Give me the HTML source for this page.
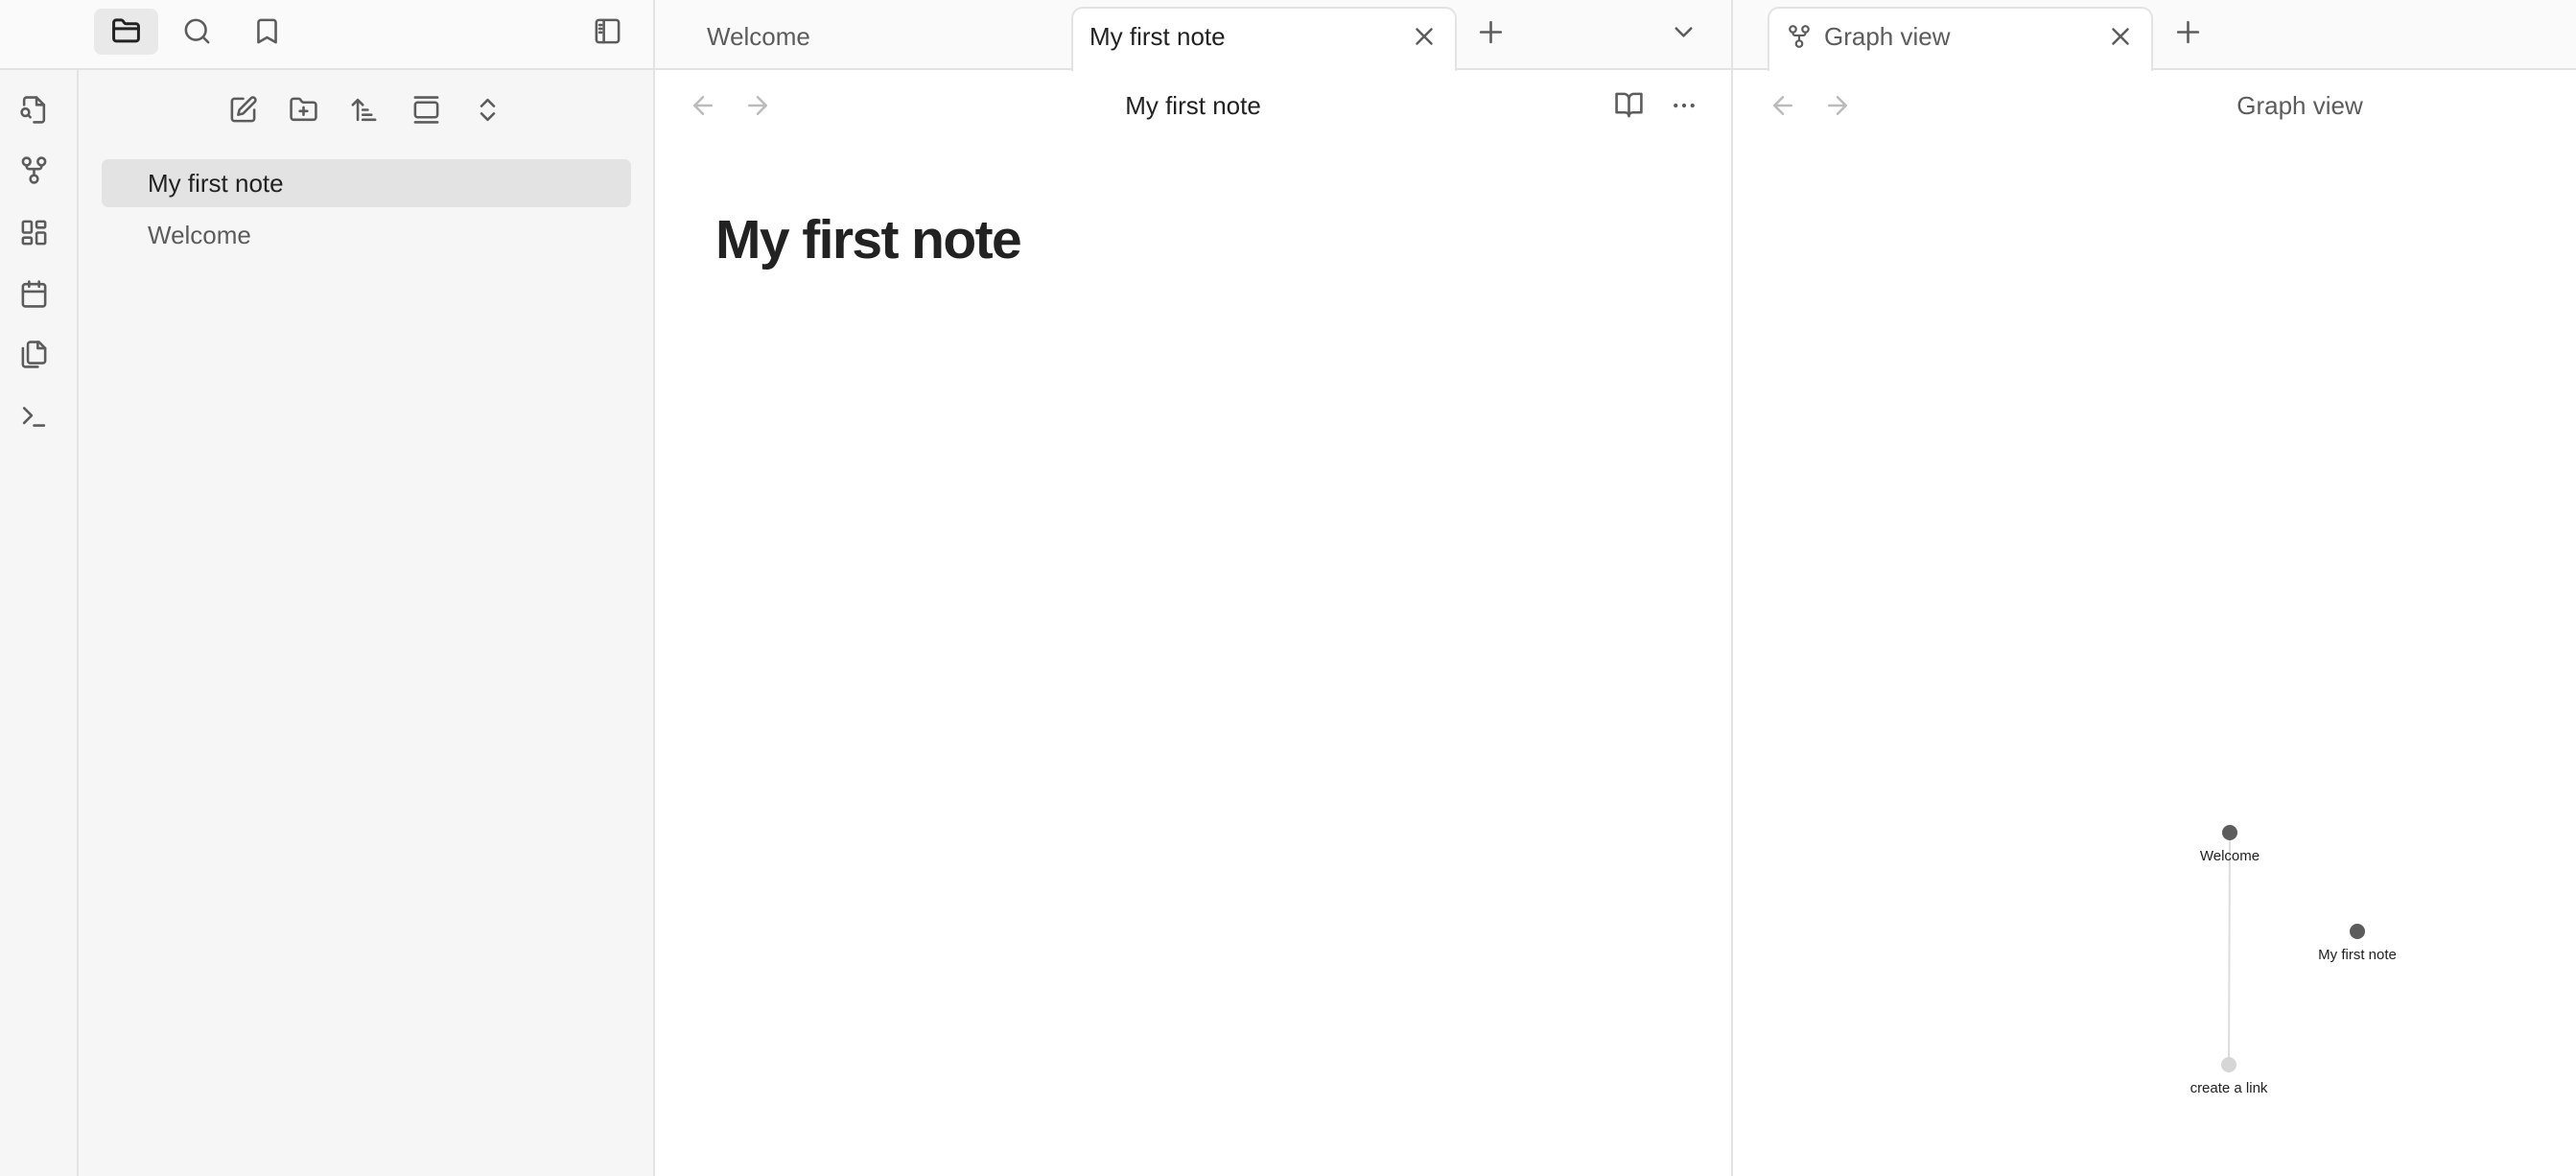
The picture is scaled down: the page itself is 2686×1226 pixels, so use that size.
<!DOCTYPE html>
<html><head><meta charset="utf-8">
<style>
*{box-sizing:border-box;margin:0;padding:0}
body{width:2686px;height:1226px;overflow:hidden;background:#fff;font-family:"Liberation Sans",sans-serif;position:relative;color:#222}
.a{position:absolute}
svg.i{position:absolute;fill:none;stroke:#5c5c5c;stroke-width:2;stroke-linecap:round;stroke-linejoin:round}
.t{position:absolute;white-space:nowrap;line-height:1}
</style></head><body>
<div class="a" style="left:0;top:0;width:682px;height:72px;background:#fafafa"></div>
<div class="a" style="left:0;top:72px;width:682px;height:1154px;background:#f6f6f6"></div>
<div class="a" style="left:0;top:71px;width:682px;height:2px;background:#e3e3e3"></div>
<div class="a" style="left:80px;top:72px;width:2px;height:1154px;background:#e3e3e3"></div>
<div class="a" style="left:681px;top:0;width:2px;height:1226px;background:#e3e3e3"></div>
<div class="a" style="left:683px;top:0;width:1122px;height:72px;background:#fafafa"></div>
<div class="a" style="left:1806px;top:0;width:880px;height:72px;background:#fafafa"></div>
<div class="a" style="left:683px;top:71px;width:2003px;height:2px;background:#e3e3e3"></div>
<div class="a" style="left:1805px;top:0;width:2px;height:1226px;background:#e3e3e3"></div>
<div class="a" style="left:1117px;top:7px;width:402px;height:67px;background:#fff;border:2px solid #e3e3e3;border-bottom:none;border-radius:12px 12px 0 0"></div>
<div class="a" style="left:1843px;top:7px;width:402px;height:67px;background:#fff;border:2px solid #e3e3e3;border-bottom:none;border-radius:12px 12px 0 0"></div>

<div class="a" style="left:98px;top:9px;width:67px;height:48px;background:#e9e9e9;border-radius:8px"></div>
<svg class="i" style="left:116px;top:17px;stroke:#222;stroke-width:2.3" width="31" height="31" viewBox="0 0 24 24"><path d="M4 20h16a2 2 0 0 0 2-2V8a2 2 0 0 0-2-2h-7.9a2 2 0 0 1-1.7-.9l-.8-1.2A2 2 0 0 0 7.9 3H4a2 2 0 0 0-2 2v13a2 2 0 0 0 2 2z"/><path d="M2 10h20"/></svg>
<svg class="i" style="left:190px;top:17px" width="31" height="31" viewBox="0 0 24 24"><circle cx="11" cy="11" r="8"/><path d="M21 21l-4.3-4.3"/></svg>
<svg class="i" style="left:263px;top:17px" width="31" height="31" viewBox="0 0 24 24"><path d="M19 21l-7-4-7 4V5a2 2 0 0 1 2-2h10a2 2 0 0 1 2 2z"/></svg>
<svg class="i" style="left:618px;top:17px" width="31" height="31" viewBox="0 0 24 24"><rect x="3" y="3" width="18" height="18" rx="2"/><path d="M9 3v18M5.5 7h1.5M5.5 10h1.5M5.5 13h1.5"/></svg>

<svg class="i" style="left:20px;top:99px" width="31" height="31" viewBox="0 0 24 24"><path d="M4 8V4a2 2 0 0 1 2-2h8l6 6v12a2 2 0 0 1-2 2h-6"/><path d="M14 2v6h6"/><circle cx="5" cy="14" r="3"/><path d="M9 18l-1.5-1.5"/></svg>
<svg class="i" style="left:20px;top:162px" width="31" height="31" viewBox="0 0 24 24"><circle cx="6" cy="5" r="3"/><circle cx="18" cy="5" r="3"/><circle cx="12" cy="19" r="3"/><path d="M6 8v1a2 2 0 0 0 2 2h8a2 2 0 0 0 2-2V8M12 11v5"/></svg>
<svg class="i" style="left:20px;top:227px" width="31" height="31" viewBox="0 0 24 24"><rect x="3" y="3" width="7" height="9" rx="1"/><rect x="14" y="3" width="7" height="5" rx="1"/><rect x="14" y="12" width="7" height="9" rx="1"/><rect x="3" y="16" width="7" height="5" rx="1"/></svg>
<svg class="i" style="left:20px;top:291px" width="31" height="31" viewBox="0 0 24 24"><rect x="3" y="4" width="18" height="18" rx="2"/><path d="M16 2v4M8 2v4M3 10h18"/></svg>
<svg class="i" style="left:20px;top:354px" width="31" height="31" viewBox="0 0 24 24"><path d="M9 2h7l5 5v10a2 2 0 0 1-2 2H9a2 2 0 0 1-2-2V4a2 2 0 0 1 2-2z"/><path d="M15 2v5h6"/><path d="M3 7v13a2 2 0 0 0 2 2h10"/></svg>
<svg class="i" style="left:20px;top:419px" width="31" height="31" viewBox="0 0 24 24"><path d="M4 17l6-6-6-6M12 19h8"/></svg>

<svg class="i" style="left:238px;top:99px" width="31" height="31" viewBox="0 0 24 24"><path d="M12 3H5a2 2 0 0 0-2 2v14a2 2 0 0 0 2 2h14a2 2 0 0 0 2-2v-7"/><path d="M18.4 2.6a2.1 2.1 0 0 1 3 3L12 15l-4 1 1-4z"/></svg>
<svg class="i" style="left:301px;top:99px" width="31" height="31" viewBox="0 0 24 24"><path d="M12 10v6M9 13h6"/><path d="M20 20a2 2 0 0 0 2-2V8a2 2 0 0 0-2-2h-7.9a2 2 0 0 1-1.7-.9l-.8-1.2A2 2 0 0 0 7.9 3H4a2 2 0 0 0-2 2v13a2 2 0 0 0 2 2z"/></svg>
<svg class="i" style="left:364px;top:99px" width="31" height="31" viewBox="0 0 24 24"><path d="M3 8l4-4 4 4M7 4v16M11 12h4M11 16h7M11 20h10"/></svg>
<svg class="i" style="left:429px;top:99px" width="31" height="31" viewBox="0 0 24 24"><path d="M3 2h18M3 22h18"/><rect x="3" y="6" width="18" height="12" rx="2"/></svg>
<svg class="i" style="left:493px;top:99px" width="31" height="31" viewBox="0 0 24 24"><path d="M7 15l5 5 5-5M7 9l5-5 5 5"/></svg>

<div class="a" style="left:106px;top:166px;width:552px;height:50px;background:#e3e3e3;border-radius:7px"></div>
<div class="t" style="left:154px;top:178px;font-size:26px;color:#222">My first note</div>
<div class="t" style="left:154px;top:232px;font-size:26px;color:#5c5c5c">Welcome</div>

<div class="t" style="left:737px;top:25px;font-size:26px;color:#5c5c5c">Welcome</div>
<div class="t" style="left:1136px;top:25px;font-size:26px;color:#222">My first note</div>
<svg class="i" style="left:1470px;top:23px" width="30" height="30" viewBox="0 0 24 24"><path d="M18 6L6 18M6 6l12 12"/></svg>
<svg class="i" style="left:1539px;top:18px" width="31" height="31" viewBox="0 0 24 24"><path d="M12 4v16M4 12h16"/></svg>
<svg class="i" style="left:1740px;top:18px" width="31" height="31" viewBox="0 0 24 24"><path d="M6 9l6 6 6-6"/></svg>

<svg class="i" style="left:718px;top:95px;stroke:#bbb" width="30" height="30" viewBox="0 0 24 24"><path d="M19 12H5M12 19l-7-7 7-7"/></svg>
<svg class="i" style="left:775px;top:95px;stroke:#bbb" width="30" height="30" viewBox="0 0 24 24"><path d="M5 12h14M12 5l7 7-7 7"/></svg>
<div class="t" style="left:1044px;top:97px;width:400px;text-align:center;font-size:26px;color:#222">My first note</div>
<svg class="i" style="left:1683px;top:94px" width="31" height="31" viewBox="0 0 24 24"><path d="M2 3h6a4 4 0 0 1 4 4v14a3 3 0 0 0-3-3H2zM22 3h-6a4 4 0 0 0-4 4v14a3 3 0 0 1 3-3h7z"/></svg>
<svg class="a" style="left:1741px;top:95px" width="30" height="30" viewBox="0 0 24 24"><circle cx="5" cy="12" r="1.7" fill="#5c5c5c"/><circle cx="12" cy="12" r="1.7" fill="#5c5c5c"/><circle cx="19" cy="12" r="1.7" fill="#5c5c5c"/></svg>
<div class="t" style="left:746px;top:222px;font-size:57px;font-weight:bold;color:#222;letter-spacing:-1.6px">My first note</div>

<svg class="i" style="left:1863px;top:25px" width="26" height="26" viewBox="0 0 24 24"><circle cx="6" cy="5" r="3"/><circle cx="18" cy="5" r="3"/><circle cx="12" cy="19" r="3"/><path d="M6 8v1a2 2 0 0 0 2 2h8a2 2 0 0 0 2-2V8M12 11v5"/></svg>
<div class="t" style="left:1902px;top:25px;font-size:26px;color:#5c5c5c">Graph view</div>
<svg class="i" style="left:2196px;top:23px" width="30" height="30" viewBox="0 0 24 24"><path d="M18 6L6 18M6 6l12 12"/></svg>
<svg class="i" style="left:2266px;top:18px" width="31" height="31" viewBox="0 0 24 24"><path d="M12 4v16M4 12h16"/></svg>
<svg class="i" style="left:1844px;top:95px;stroke:#bbb" width="30" height="30" viewBox="0 0 24 24"><path d="M19 12H5M12 19l-7-7 7-7"/></svg>
<svg class="i" style="left:1901px;top:95px;stroke:#bbb" width="30" height="30" viewBox="0 0 24 24"><path d="M5 12h14M12 5l7 7-7 7"/></svg>
<div class="t" style="left:2198px;top:97px;width:400px;text-align:center;font-size:26px;color:#5c5c5c">Graph view</div>

<svg class="a" style="left:1806px;top:73px" width="880" height="1153" viewBox="1806 73 880 1153">
<line x1="2325" y1="868" x2="2324" y2="1110" stroke="#ddd" stroke-width="2"/>
<circle cx="2325" cy="868" r="8" fill="#5c5c5c"/>
<circle cx="2458" cy="971" r="8" fill="#5c5c5c"/>
<circle cx="2324" cy="1110" r="8" fill="#d6d6d6"/>
<text x="2325" y="897" font-family="Liberation Sans, sans-serif" font-size="15" fill="#222" text-anchor="middle">Welcome</text>
<text x="2458" y="1000" font-family="Liberation Sans, sans-serif" font-size="15" fill="#222" text-anchor="middle">My first note</text>
<text x="2324" y="1139" font-family="Liberation Sans, sans-serif" font-size="15" fill="#222" text-anchor="middle">create a link</text>
</svg>
</body></html>
